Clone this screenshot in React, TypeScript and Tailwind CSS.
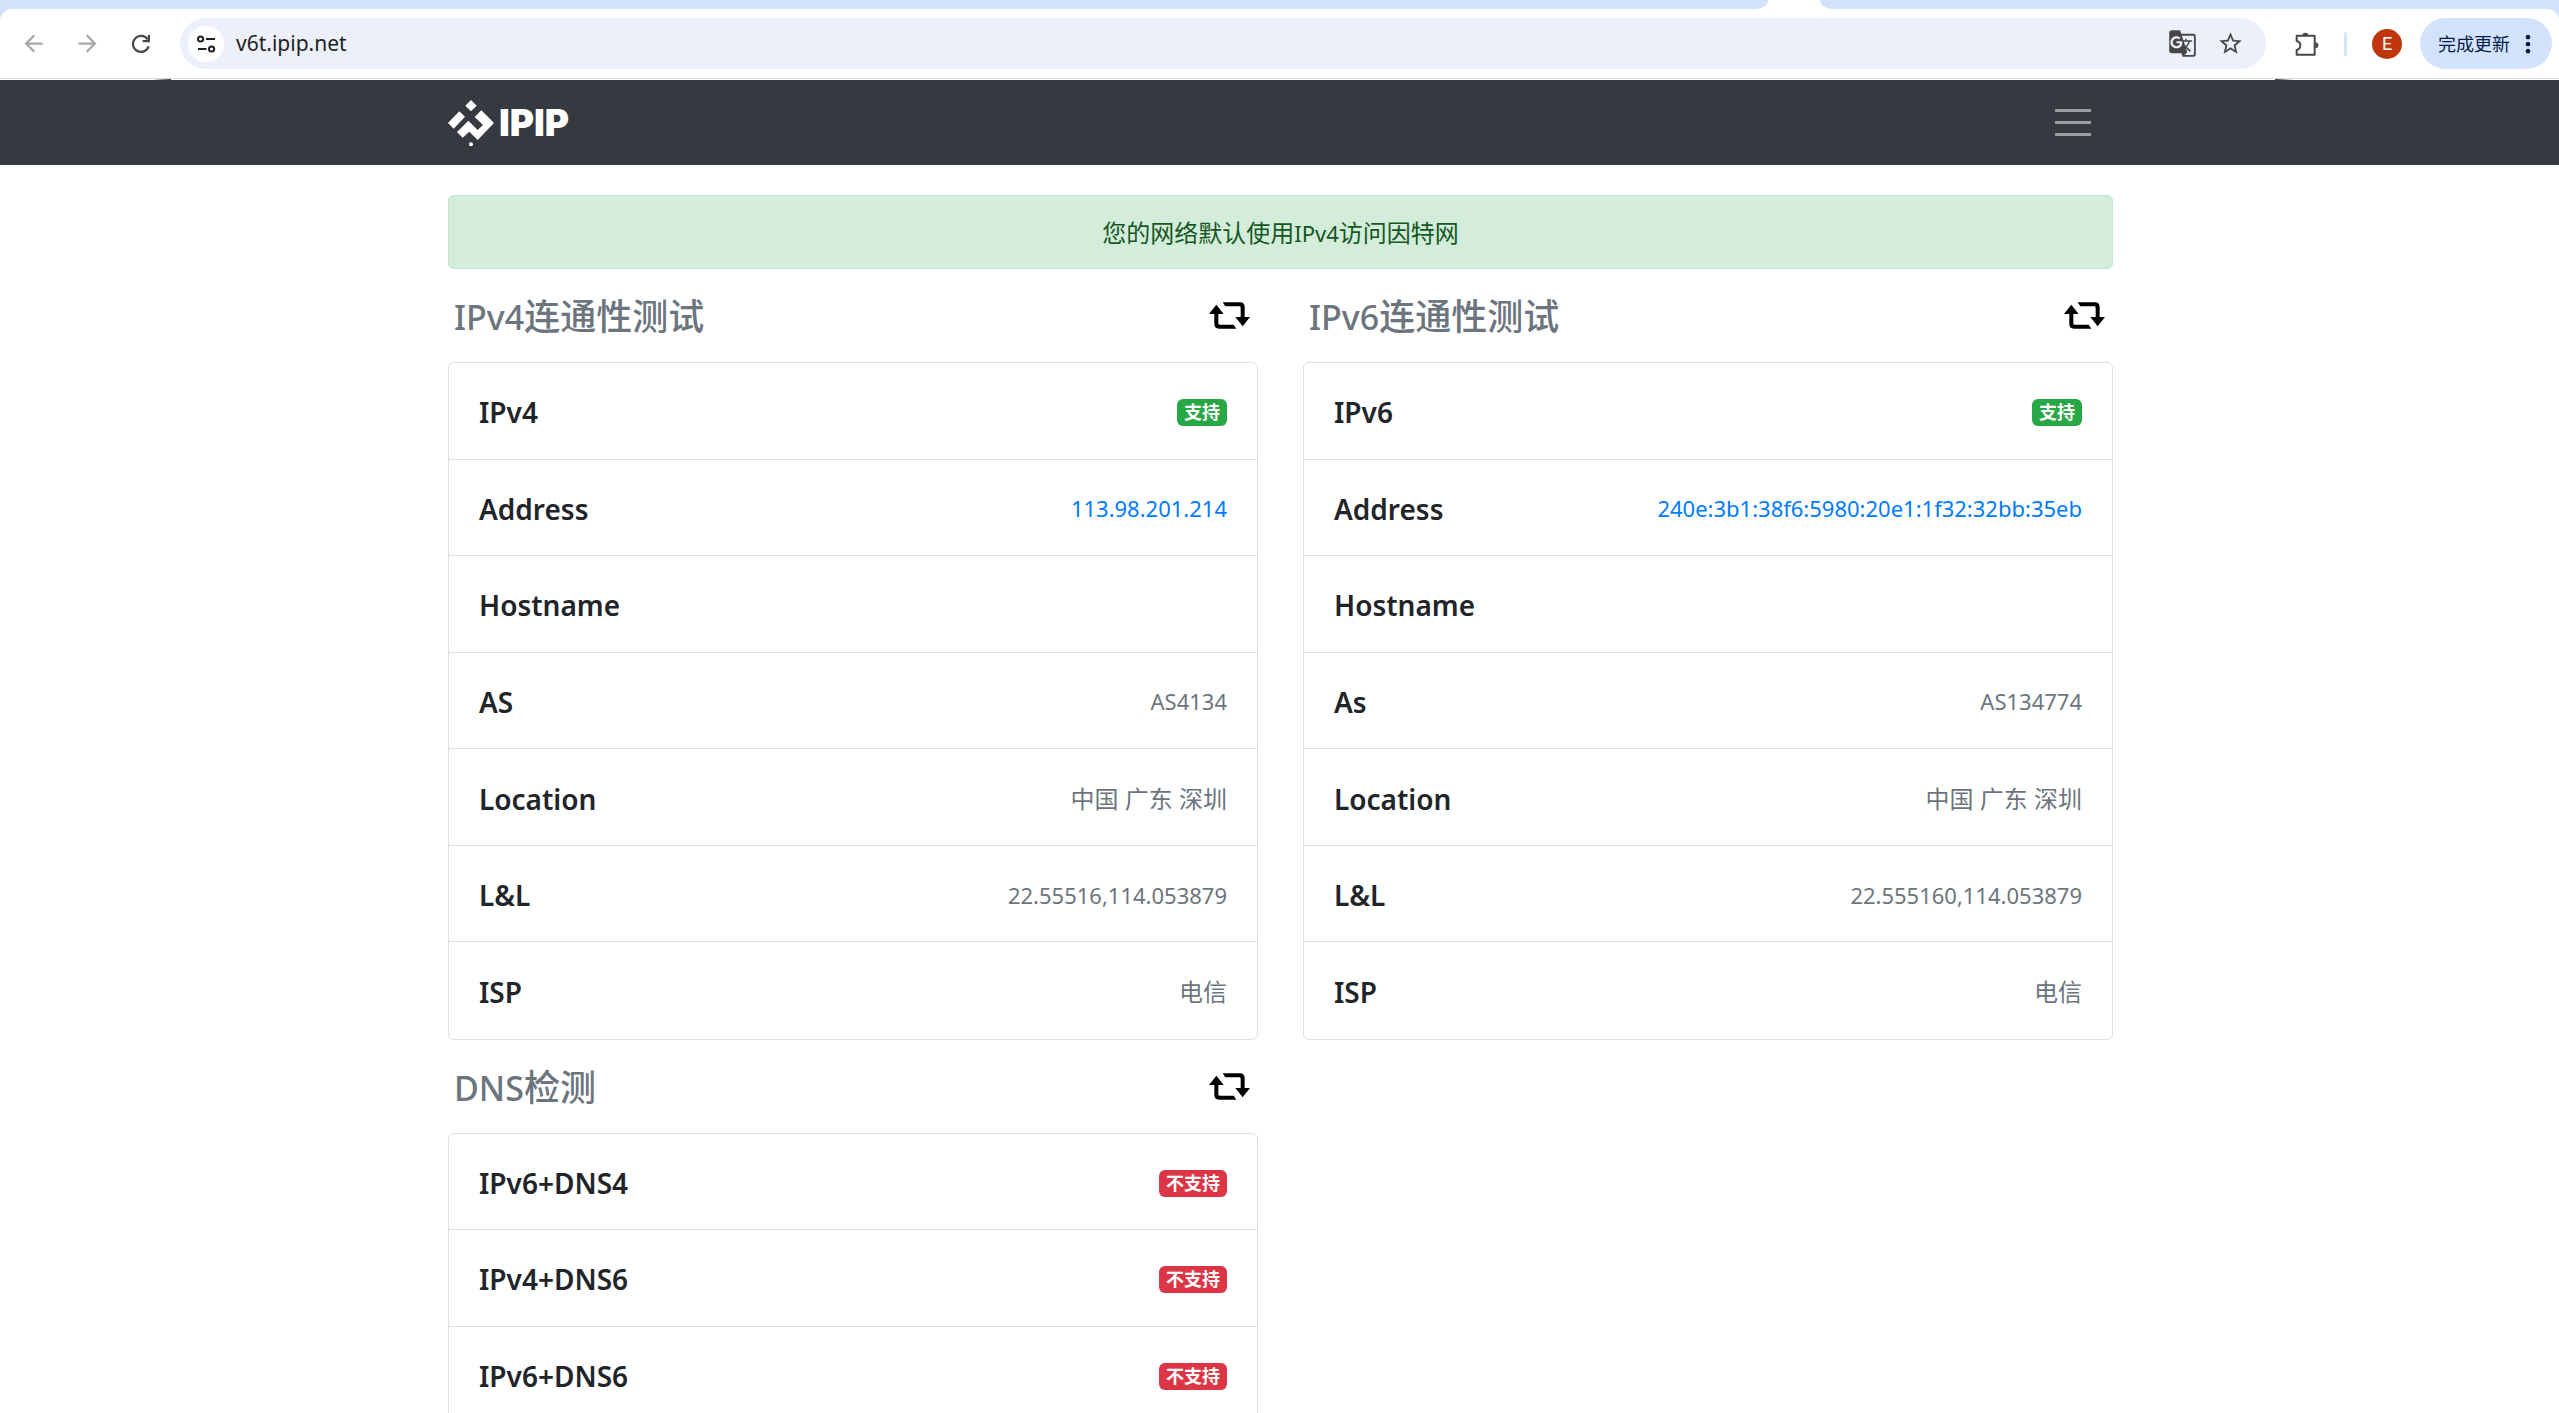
import { MdArrowBack, MdArrowForward, MdGTranslate, MdStarBorder, MdMoreVert } from "react-icons/md"

interface Row {
    label: string
    value?: string
    cjk?: boolean
    link?: boolean
    supported?: boolean
}

interface PanelParams {
    latin: string
    cjk: string
    rows: Row[]
    size: string
}

const ipv4Rows: Row[] = [
    { label: 'IPv4', supported: true },
    { label: 'Address', value: '113.98.201.214', link: true },
    { label: 'Hostname' },
    { label: 'AS', value: 'AS4134' },
    { label: 'Location', value: '中国 广东 深圳', cjk: true },
    { label: 'L&L', value: '22.55516,114.053879' },
    { label: 'ISP', value: '电信', cjk: true },
]

const ipv6Rows: Row[] = [
    { label: 'IPv6', supported: true },
    { label: 'Address', value: '240e:3b1:38f6:5980:20e1:1f32:32bb:35eb', link: true },
    { label: 'Hostname' },
    { label: 'As', value: 'AS134774' },
    { label: 'Location', value: '中国 广东 深圳', cjk: true },
    { label: 'L&L', value: '22.555160,114.053879' },
    { label: 'ISP', value: '电信', cjk: true },
]

const dnsRows: Row[] = [
    { label: 'IPv6+DNS4', supported: false },
    { label: 'IPv4+DNS6', supported: false },
    { label: 'IPv6+DNS6', supported: false },
]

function ReloadIcon() {
    return (
        <svg width="20" height="20" viewBox="0 0 20 20" fill="none" stroke="#474747" strokeWidth="2.2">
            <path d="M16.6 5.4A8 8 0 1 0 17.6 12.4" />
            <path d="M17.9 1V7.2H11.6" />
        </svg>
    )
}

function SiteInfoIcon() {
    return (
        <svg width="20" height="20" viewBox="0 0 20 20" fill="none" stroke="#1f1f1f" strokeWidth="2">
            <circle cx="4.6" cy="5" r="2.6" />
            <path d="M10 5H19M2 15H10.5" />
            <circle cx="15.6" cy="15" r="2.6" />
        </svg>
    )
}

function PuzzleIcon() {
    return (
        <svg width="24" height="24" viewBox="0 0 72 72" fill="none">
            <path d="M5 11H59V68H5V54C14 52 16 46 16 40S14 29 5 27Z" stroke="#474747" strokeWidth="6" strokeLinejoin="round" />
            <path d="M22 11a9 9 0 0 1 18 0ZM61 31a9 9 0 0 1 0 18Z" fill="#474747" />
        </svg>
    )
}

function RetweetIcon() {
    return (
        <svg width="41" height="27" viewBox="0 0 123 81" fill="#000">
            <path d="M22 8L0 36H16V66Q16 80 30 80H82L74 68H32Q28 68 28 64V36H44Z" />
            <path d="M22 8L0 36H16V66Q16 80 30 80H82L74 68H32Q28 68 28 64V36H44Z" transform="rotate(180 61.5 40.5)" />
        </svg>
    )
}

function LogoMark() {
    return (
        <svg width="46" height="48" viewBox="12 8 138 144" fill="#fff">
            <path d="M81 11L98 28L81 45L64 28Z" />
            <path d="M12 80L46 45L63 61L29 97Z" />
            <path d="M39 107L73 73L101 101L117 86L92 62L112 42L150 80L101 131L76 106L56 124Z" />
            <circle cx="81" cy="144" r="6" />
        </svg>
    )
}

function Browser() {
    return (
        <header className="bg-[#d3e3fd]">
            <div className="flex h-[9px] bg-white">
                <div className="flex-1 bg-[#d3e3fd] rounded-br-[12px_9px]"></div>
                <div className="w-[52px]"></div>
                <div className="w-[739px] bg-[#d3e3fd] rounded-bl-[12px_9px]"></div>
            </div>
            <div className="flex items-center h-[70px] py-[9px] pl-5 pr-[7px] bg-white rounded-t-[12px] border-b border-[#dcdcdc]">
                <button aria-label="Back" className="text-[#a8a8a8]"><MdArrowBack size={27} /></button>
                <button aria-label="Forward" className="ml-[27px] text-[#a8a8a8]"><MdArrowForward size={27} /></button>
                <button aria-label="Reload" className="ml-[30px]"><ReloadIcon /></button>
                <div className="flex flex-1 items-center h-[51px] ml-[29px] pl-2 pr-[22px] rounded-full bg-[#ecf0fa]">
                    <button aria-label="Site information" className="flex items-center justify-center size-9 rounded-full bg-white"><SiteInfoIcon /></button>
                    <input aria-label="Address bar" defaultValue="v6t.ipip.net" className="flex-1 ml-3 bg-transparent text-[21px] text-[#1f1f1f] outline-none" />
                    <button aria-label="Translate" className="text-[#474747]"><MdGTranslate size={29} /></button>
                    <button aria-label="Bookmark" className="ml-5 text-[#474747]"><MdStarBorder size={27} /></button>
                </div>
                <button aria-label="Extensions" className="ml-[29px]"><PuzzleIcon /></button>
                <div className="w-[3px] h-6 ml-[25px] rounded-full bg-[#d3e3fd]"></div>
                <button aria-label="Profile" className="size-[30px] ml-[25px] rounded-full bg-[#bf360c] text-white font-[Roboto,sans-serif] text-lg leading-[30px]">E</button>
                <button className="flex items-center h-[51px] ml-[18px] pl-[18px] pr-2.5 gap-1 rounded-full bg-[#d3e3fd] text-[#041e49] text-lg">
                    <span>完成更新</span>
                    <MdMoreVert size={28} />
                </button>
            </div>
            <div className="flex justify-between h-px pl-[153px] pr-[266px] bg-white">
                <div className="w-[18px] bg-linear-to-r from-white to-[#343a40]"></div>
                <div className="w-[18px] bg-linear-to-l from-white to-[#343a40]"></div>
            </div>
        </header>
    )
}

function Navbar() {
    return (
        <nav className="bg-[#343a40]">
            <div className="flex items-center justify-between h-[85px] max-w-[1667px] mx-auto pl-0.5">
                <a href="#" className="flex items-center gap-[5px] text-white">
                    <LogoMark />
                    <span className="font-[Inter,sans-serif] font-black text-[37px]">IPIP</span>
                </a>
                <button aria-label="Menu" className="flex flex-col gap-[9px] w-9 mr-[22px]">
                    <span className="w-full h-[3px] bg-[#9a9da0]"></span>
                    <span className="w-full h-[3px] bg-[#9a9da0]"></span>
                    <span className="w-full h-[3px] bg-[#9a9da0]"></span>
                </button>
            </div>
        </nav>
    )
}

function Badge({ supported }: { supported: boolean }) {
    return (
        <span className={`px-[7px] rounded-md font-bold text-lg leading-[27px] text-white ${supported ? 'bg-[#28a745]' : 'bg-[#dc3545]'}`}>
            {supported ? '支持' : '不支持'}
        </span>
    )
}

function Panel({ latin, cjk, rows, size }: PanelParams) {
    return (
        <section>
            <div className="flex items-center justify-between h-[93px] pl-1.5 pr-2">
                <h2 className="pt-0.5 font-medium text-[36px] text-[#6c757d]"><span className="text-[34px]">{latin}</span>{cjk}</h2>
                <button aria-label="Refresh"><RetweetIcon /></button>
            </div>
            <ul className={`grid auto-rows-fr divide-y divide-[#dfdfdf] border border-[#dfdfdf] rounded-md ${size}`}>
                {rows.map((row) => (
                    <li key={row.label} className="flex items-center justify-between px-[30px] pt-[3px]">
                        <h3 className="font-semibold text-[28px] leading-9">{row.label}</h3>
                        {row.supported !== undefined && <Badge supported={row.supported} />}
                        {row.link && <a href="#" className="text-[22px] text-[#007bff]">{row.value}</a>}
                        {row.value && !row.link && <span className={`text-[#6c757d] ${row.cjk ? 'text-2xl' : 'text-[22px]'}`}>{row.value}</span>}
                    </li>
                ))}
            </ul>
        </section>
    )
}

export default function App() {
    return (
        <div className="flex flex-col h-screen overflow-hidden bg-white text-[#212529] font-['Noto_Sans','Noto_Sans_CJK_SC',sans-serif]">
            <Browser />
            <div className="flex-1 overflow-hidden">
                <Navbar />
                <main className="max-w-[1667px] mx-auto pt-[30px] pl-0.5">
                    <div role="alert" className="pt-[19px] pb-[17px] border border-[#c3e6cb] rounded-md bg-[#d4edda] text-center text-2xl leading-9 text-[#155724]">
                        您的网络默认使用<span className="text-[22px]">IPv4</span>访问因特网
                    </div>
                    <div className="grid grid-cols-2 gap-x-[45px]">
                        <Panel latin="IPv4" cjk="连通性测试" rows={ipv4Rows} size="min-h-[678px]" />
                        <Panel latin="IPv6" cjk="连通性测试" rows={ipv6Rows} size="min-h-[678px]" />
                        <Panel latin="DNS" cjk="检测" rows={dnsRows} size="min-h-[291px]" />
                    </div>
                </main>
            </div>
        </div>
    )
}
